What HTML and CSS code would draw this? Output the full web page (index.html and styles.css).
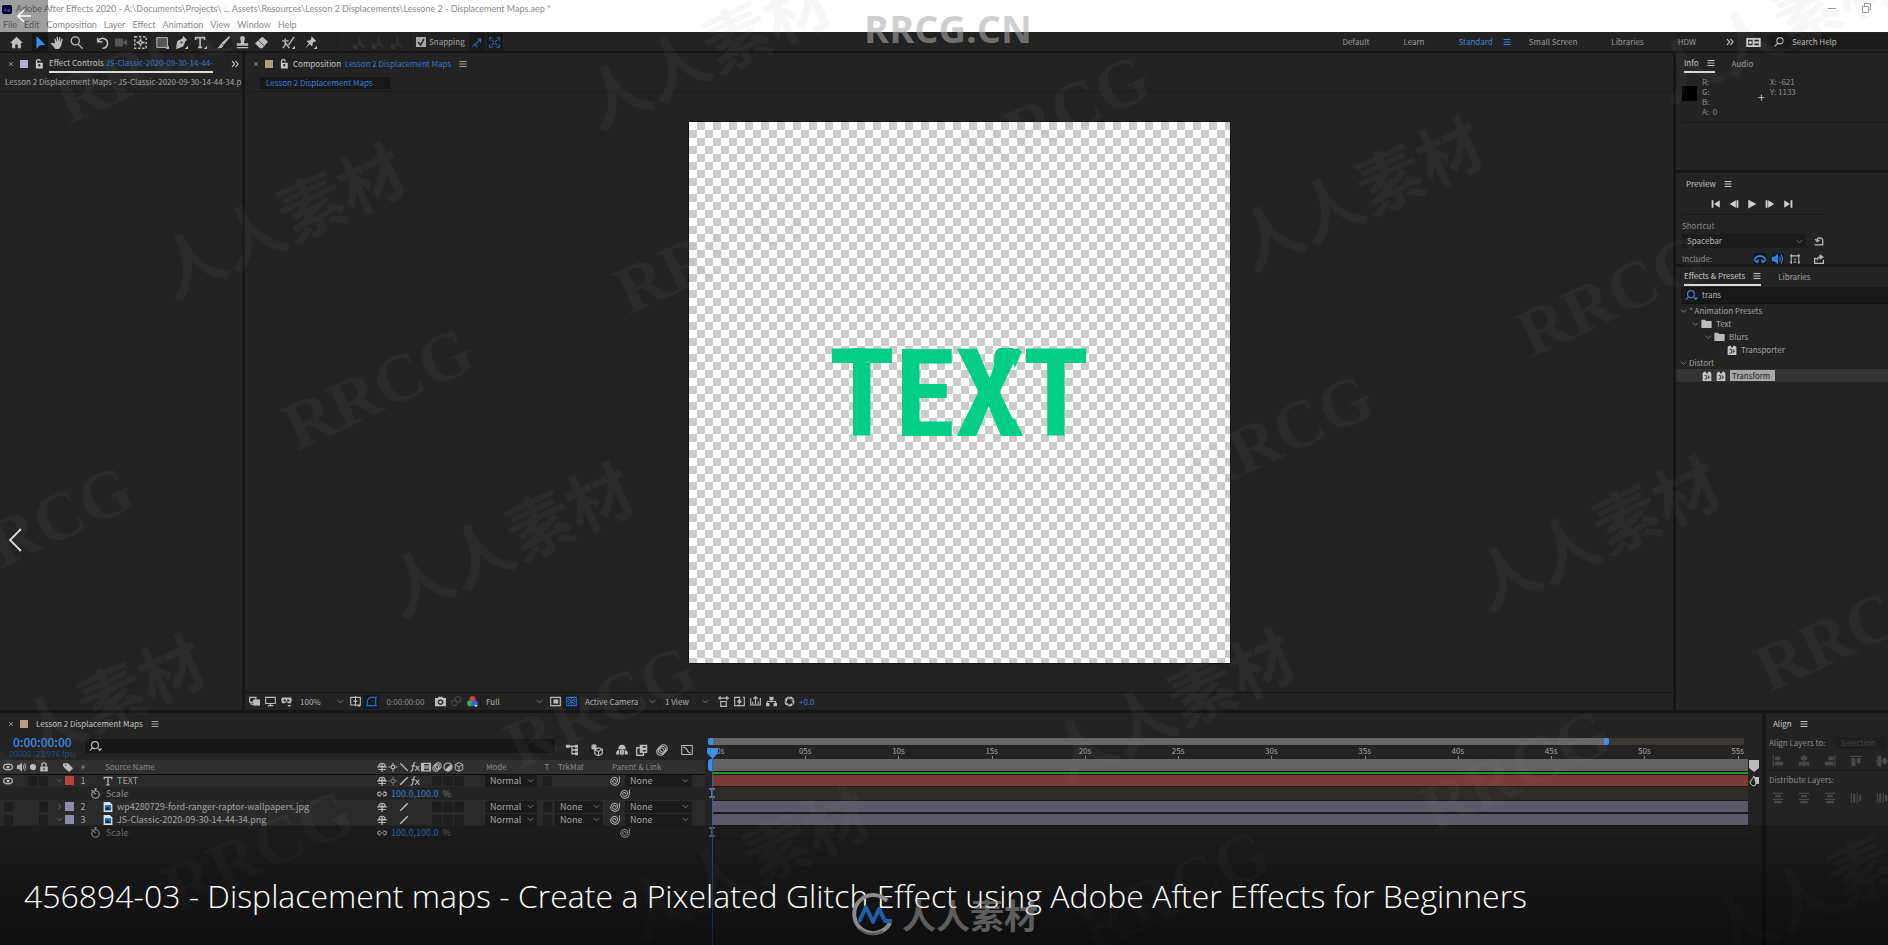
FILE: index.html
```html
<!DOCTYPE html>
<html lang="en">
<head>
<meta charset="utf-8">
<title>Adobe After Effects 2020</title>
<link rel="stylesheet" href="styles.css">
</head>
<body>
<svg class="sprite" aria-hidden="true">
  <symbol id="home" viewBox="0 0 16 16"><path fill="currentColor" d="M8 1 0 8.500h2.500V15h4v-4.500h3V15h4V8.500H16z"/></symbol>
  <symbol id="arrow" viewBox="0 0 16 16"><path fill="currentColor" d="M3 0v16l4-4.500 7-.5z"/></symbol>
  <symbol id="hand" viewBox="0 0 16 16"><path fill="currentColor" d="M5 9 4 3.500q1-1 1.600.2L7 7.500V1.200q1-1 1.600 0L9 7l1.200-5.500q1-.8 1.500.3L11 8l2-4.500q1.200-.5 1.400.6L12.500 12 10 16H5.500L0 9.500q0-1.500 1.700-1z"/></symbol>
  <symbol id="zoom" viewBox="0 0 16 16"><g fill="none" stroke="currentColor" stroke-width="1.600"><circle cx="6.500" cy="6" r="5"/><path d="m10 10 5.500 5.500"/></g></symbol>
  <symbol id="rotate" viewBox="0 0 16 16"><path fill="none" stroke="currentColor" stroke-width="1.800" d="M2 8V2m0 5h6M3 6a6 6 0 1 1 5 9"/></symbol>
  <symbol id="vidcam" viewBox="0 0 16 16"><path fill="currentColor" d="M0 3h10v4l5-3v8l-5-3v4H0z"/></symbol>
  <symbol id="anchor" viewBox="0 0 16 16"><g fill="none" stroke="currentColor" stroke-width="1.800"><path stroke-dasharray="3 2" d="M1 1h14v14H1z"/><circle cx="8" cy="8" r="2"/><path d="M8 3v3m0 4v3M3 8h3m4 0h3"/></g></symbol>
  <symbol id="rect" viewBox="0 0 16 16"><path fill="#555" stroke="currentColor" stroke-width="1.200" d="M1 2h13v12H1z"/><path fill="currentColor" d="M16 12v4h-4z"/></symbol>
  <symbol id="pen" viewBox="0 0 16 16"><path fill="currentColor" d="m10 0 5 5-2 1-3 7-8 3-1-1 5-6-5 5 2-8 6-3z"/><circle cx="8" cy="8" r="1.300" fill="#232323"/><path fill="currentColor" d="M16 12v4h-4z"/></symbol>
  <symbol id="type" viewBox="0 0 16 16"><path fill="none" stroke="currentColor" stroke-width="2" d="M2 5V2h11v3M7.500 2v12M5 14h5"/><path fill="currentColor" d="M16 12v4h-4z"/></symbol>
  <symbol id="brush" viewBox="0 0 16 16"><path fill="currentColor" d="M15 0q2 1 0 3L8 11 5.500 8.500zM5 9l3 3q-2 4-8 3 3-1 5-6z"/></symbol>
  <symbol id="stamp" viewBox="0 0 16 16"><path fill="currentColor" d="M6 7 5 3q0-3 3-3t3 3l-1 4v2h5v3H1V9h5zM1 13.500h14V15H1z"/></symbol>
  <symbol id="eraser" viewBox="0 0 16 16"><path fill="currentColor" d="m9 1 7 6-7 8H6L0 9z"/><path stroke="#232323" d="m4 5 7 7"/></symbol>
  <symbol id="roto" viewBox="0 0 16 16"><path fill="none" stroke="currentColor" stroke-width="1.700" d="M4 3v2M0 6h8M4 6v5l-3 4M5 9l4 6M15 1 8 11"/><path fill="currentColor" d="M16 12v4h-4z"/></symbol>
  <symbol id="pin" viewBox="0 0 16 16"><path fill="currentColor" d="m9 0 6 6-2 1-2 1-1 5-3-3-6 6 5-7-3-3 5-1 1-2z"/><path fill="currentColor" d="M16 12v4h-4z"/></symbol>
  <symbol id="snapa" viewBox="0 0 16 16"><path fill="none" stroke="currentColor" stroke-width="1.500" d="M9 3h5v5M14 3 8 9l-6 5M5 10l3 2 1 3"/></symbol>
  <symbol id="snapb" viewBox="0 0 16 16"><path fill="none" stroke="currentColor" stroke-width="1.500" d="M1 5V1h4m6 0h4v4m0 6v4h-4m-6 0H1v-4M4 4l3 3m5-3L9 7m-5 5 3-3m5 3L9 9"/></symbol>
  <symbol id="axis" viewBox="0 0 16 16"><path fill="none" stroke="currentColor" stroke-width="2" d="M8 1v8l-6 5M8 9l6 5M1 9v6h5"/></symbol>
  <symbol id="lock-open" viewBox="0 0 16 16"><path fill="currentColor" fill-rule="evenodd" d="M3 6h11v9H3zm4 2v4h3V8z"/><path fill="none" stroke="currentColor" stroke-width="1.800" d="M4 7V4q0-3 3-3t3 3"/></symbol>
  <symbol id="lock" viewBox="0 0 16 16"><path fill="currentColor" fill-rule="evenodd" d="M2 7h12v8H2zm5 2v4h2V9z"/><path fill="none" stroke="currentColor" stroke-width="2" d="M4.500 7V5q0-3.500 3.500-3.500T11.500 5v2"/></symbol>
  <symbol id="menu" viewBox="0 0 16 16"><path stroke="currentColor" stroke-width="2" d="M1 3h14M1 8h14M1 13h14"/></symbol>
  <symbol id="more" viewBox="0 0 16 16"><path fill="none" stroke="currentColor" stroke-width="2.200" d="m2 2 5 6-5 6M9 2l5 6-5 6"/></symbol>
  <symbol id="close" viewBox="0 0 16 16"><path stroke="currentColor" stroke-width="2" d="m4 4 8 8m0-8-8 8"/></symbol>
  <symbol id="chev" viewBox="0 0 16 16"><path fill="none" stroke="currentColor" stroke-width="2" d="m2 5 6 6 6-6"/></symbol>
  <symbol id="chevr" viewBox="0 0 16 16"><path fill="none" stroke="currentColor" stroke-width="2" d="m5 2 6 6-6 6"/></symbol>
  <symbol id="mag" viewBox="0 0 16 16"><g fill="none" stroke="currentColor" stroke-width="1.700"><circle cx="9.500" cy="6" r="5"/><path d="m6 10-5 5"/></g></symbol>
  <symbol id="magd" viewBox="0 0 20 16"><g fill="none" stroke="currentColor" stroke-width="1.700"><circle cx="8.500" cy="6" r="5"/><path d="m5 10-4 4"/></g><path fill="currentColor" d="M12 11h7l-3.500 4z"/></symbol>
  <symbol id="wsreset" viewBox="0 0 16 10"><path fill="currentColor" fill-rule="evenodd" d="M0 0h16v10H0zm2 2v6h5V2zm7 0v2h5V2zm0 4v2h5V6z"/><circle cx="4.500" cy="5" r="1.800" fill="currentColor"/></symbol>
  <symbol id="first" viewBox="0 0 16 16"><path fill="currentColor" d="M1 2h3v12H1zm13 0v12L5 8z"/></symbol>
  <symbol id="prev" viewBox="0 0 16 16"><path fill="currentColor" d="M15 2h-3v12h3zm-4 0v12L1 8z"/></symbol>
  <symbol id="play" viewBox="0 0 16 16"><path fill="currentColor" d="m2 1 13 7-13 7z"/></symbol>
  <symbol id="next" viewBox="0 0 16 16"><path fill="currentColor" d="M1 2h3v12H1zm4 0v12l10-6z"/></symbol>
  <symbol id="last" viewBox="0 0 16 16"><path fill="currentColor" d="M15 2h-3v12h3zM2 2v12l9-6z"/></symbol>
  <symbol id="undo" viewBox="0 0 16 16"><path fill="none" stroke="currentColor" stroke-width="2" d="M1 14h13V8q0-5-5-5T5 8M2 5l3 4 4-3"/></symbol>
  <symbol id="loopeye" viewBox="0 0 16 16"><path fill="none" stroke="currentColor" stroke-width="2" d="M5 12Q1 11 1 8q2-4 7-4t7 4q0 3-4 4M5 9v3H2m9-3v3h3"/></symbol>
  <symbol id="speaker" viewBox="0 0 16 16"><path fill="currentColor" d="M0 5h3l5-4v14l-5-4H0z"/><path fill="none" stroke="currentColor" stroke-width="1.500" d="M10 5q2 3 0 6m2-9q4 6 0 12"/></symbol>
  <symbol id="bounds" viewBox="0 0 16 16"><path fill="none" stroke="currentColor" stroke-width="1.700" d="M2 0v16M14 0v16M0 3h16M0 13h3m3 0h4m3 0h3M8 7v3"/></symbol>
  <symbol id="export" viewBox="0 0 16 16"><path fill="none" stroke="currentColor" stroke-width="2" d="M4 7H1v8h14V9M5 10q0-5 5-5"/><path fill="currentColor" d="M9 0v9l7-4z"/></symbol>
  <symbol id="folder" viewBox="0 0 16 14"><path fill="currentColor" d="M0 1h6l1 2h9v11H0z"/></symbol>
  <symbol id="preset" viewBox="0 0 16 16"><path fill="currentColor" d="M1 4 3 1h3l1 3h2l1-3h3l2 3v12H1z"/><path fill="none" stroke="#333" stroke-width="1.500" d="M4 7h3v6H4m6-6v6m0-3h3"/></symbol>
  <symbol id="eye" viewBox="0 0 16 16"><ellipse cx="8" cy="8" rx="7" ry="4.500" fill="none" stroke="currentColor" stroke-width="2"/><circle cx="8" cy="8" r="2.600" fill="currentColor"/></symbol>
  <symbol id="dot" viewBox="0 0 16 16"><circle cx="8" cy="8" r="5" fill="currentColor"/></symbol>
  <symbol id="tag" viewBox="0 0 16 16"><path fill="currentColor" fill-rule="evenodd" d="M0 2h8l8 8-6 6-8-7-2-3zm3 2v2h2V4z"/></symbol>
  <symbol id="shy" viewBox="0 0 16 16"><path fill="none" stroke="currentColor" stroke-width="1.800" d="M3 7q0-5 5-5t5 5zM0 8h16M2 12h12M8 3v13"/></symbol>
  <symbol id="sun" viewBox="0 0 16 16"><g fill="none" stroke="currentColor" stroke-width="1.700"><circle cx="8" cy="8" r="3"/><path d="M8 1v3m0 8v3M1 8h3m8 0h3"/></g></symbol>
  <symbol id="bslash" viewBox="0 0 16 16"><path stroke="currentColor" stroke-width="2" d="m2 2 12 12"/></symbol>
  <symbol id="slash" viewBox="0 0 16 16"><path stroke="currentColor" stroke-width="2.200" d="M2 14 14 2"/></symbol>
  <symbol id="fx" viewBox="0 0 16 16"><path fill="none" stroke="currentColor" stroke-width="1.800" d="M1 15q3 0 3.500-5l1-6q.5-3 3-3M2 6h6m1 0 6 8m0-8-7 8"/></symbol>
  <symbol id="film" viewBox="0 0 16 16"><path fill="currentColor" fill-rule="evenodd" d="M0 1h16v14H0zm5 2v4h8V3zm0 6v4h8V9z"/><path fill="#888" d="M5 5h8v6H5z"/></symbol>
  <symbol id="blur" viewBox="0 0 16 16"><g fill="none" stroke="currentColor" stroke-width="1.600"><circle cx="10" cy="6" r="5"/><circle cx="8" cy="8" r="5"/><circle cx="6" cy="10" r="5"/></g></symbol>
  <symbol id="adj" viewBox="0 0 16 16"><circle cx="8" cy="8" r="6.500" fill="none" stroke="currentColor" stroke-width="1.800"/><path fill="currentColor" d="M12.500 3.500a6.400 6.400 0 0 1-9 9z"/></symbol>
  <symbol id="cube" viewBox="0 0 16 16"><path fill="none" stroke="currentColor" stroke-width="1.500" d="m8 1 6 3v8l-6 3-6-3V4zM2 4l6 4 6-4M8 8v7"/></symbol>
  <symbol id="spiral" viewBox="0 0 16 16"><path fill="none" stroke="currentColor" stroke-width="1.500" d="M15 1v8q-1 6-7 6-7-1-7-7 1-6 7-6 5 1 4 6-1 4-4 4-4-1-4-4 1-3 4-2.500 2 .5 1 3"/></symbol>
  <symbol id="watch" viewBox="0 0 16 16"><g fill="none" stroke="currentColor" stroke-width="1.600"><circle cx="8" cy="9.500" r="5.500"/><path d="M6 1h4M8 1v3M2 3l2 2m4 4L5 6"/></g></symbol>
  <symbol id="link" viewBox="0 0 16 16"><path fill="none" stroke="currentColor" stroke-width="1.800" d="M6 5H4a3 3 0 0 0 0 6h2m4-6h2a3 3 0 0 1 0 6h-2M5 8h6"/></symbol>
  <symbol id="file" viewBox="0 0 16 16"><path fill="#d8e4ee" d="M1 0h10l4 4v12H1z"/><path fill="#1d6fb5" d="M3 5h10v8H3z"/><path fill="#0b2c4d" d="m3 13 4-6 6 6z"/></symbol>
  <symbol id="tlayer" viewBox="0 0 16 16"><path fill="none" stroke="currentColor" stroke-width="2" d="M2 5V2h12v3M8 2v12M5.500 14h5"/></symbol>
  <symbol id="stack" viewBox="0 0 16 16"><path fill="none" stroke="currentColor" stroke-width="1.800" d="M1 2h9v7H1zM3 10v2h3"/><path fill="currentColor" d="M6 5h10v9H6z"/></symbol>
  <symbol id="blend" viewBox="0 0 16 16"><path fill="none" stroke="currentColor" stroke-width="1.800" d="M5 5H1v10h9v-3"/><path fill="currentColor" fill-rule="evenodd" d="M5 1h10v11H5zm4 2v2h4V3zm0 5v2h4V8z"/></symbol>
  <symbol id="monitor" viewBox="0 0 16 16"><path fill="none" stroke="currentColor" stroke-width="1.600" d="M1 2h14v9H1zm7 9v3m-4 0h8"/></symbol>
  <symbol id="goggles" viewBox="0 0 16 16"><path fill="currentColor" fill-rule="evenodd" d="M1 2h14q2 8-3 9-2 0-4-3-2 3-4 3-5-1-3-9zm3 3v3h3V5zm5 0v3h3V5z"/><path fill="currentColor" d="M9 13h6l-3 3z"/></symbol>
  <symbol id="grid" viewBox="0 0 16 16"><path fill="none" stroke="currentColor" stroke-width="1.600" d="M1 2h14v11H1zM8 0v15M5 7.500h6"/><path fill="currentColor" d="M10 13h6l-3 3z"/></symbol>
  <symbol id="maskp" viewBox="0 0 16 16"><path fill="none" stroke="currentColor" stroke-width="1.600" d="M2 14V7q1-4 5-5h7v12zM0 14h4m8 0h4M12 2h4"/></symbol>
  <symbol id="camera" viewBox="0 0 16 16"><path fill="currentColor" fill-rule="evenodd" d="M0 3h4l1-2h6l1 2h4v12H0zm8 2a4 4 0 1 0 .1 0z"/><circle cx="8" cy="9" r="2" fill="currentColor"/></symbol>
  <symbol id="rings" viewBox="0 0 16 16"><g fill="none" stroke="currentColor" stroke-width="1.800"><circle cx="10" cy="5" r="4"/><circle cx="5" cy="10" r="4"/></g></symbol>
  <symbol id="rgb" viewBox="0 0 16 16"><circle cx="8" cy="4.500" r="4.500" fill="#e23b30"/><circle cx="4.500" cy="10.500" r="4.500" fill="#37ac45"/><circle cx="11" cy="10.500" r="4.500" fill="#3567e8"/><path fill="#ddd" d="M10 13h6l-3 3z"/></symbol>
  <symbol id="region" viewBox="0 0 16 16"><path fill="none" stroke="currentColor" stroke-width="1.700" d="M1 2h14v12H1z"/><path fill="currentColor" d="M5 5h7v6H5z"/></symbol>
  <symbol id="transp" viewBox="0 0 16 16"><path fill="none" stroke="currentColor" stroke-width="1.500" d="M1 2h14v12H1zM3 4l10 8m0-8L3 12M8 2v3m0 6v3M1 8h3m8 0h3"/></symbol>
  <symbol id="pixel" viewBox="0 0 16 16"><path fill="none" stroke="currentColor" stroke-width="1.700" d="M0 3h16M3 0v6m10-6v6M4 8h8v7H4z"/></symbol>
  <symbol id="fast" viewBox="0 0 16 16"><path fill="none" stroke="currentColor" stroke-width="1.600" d="M9 2H1v12h14V2h-2"/><path fill="currentColor" d="m9 2-5 7h3l-1 5 6-7H9z"/></symbol>
  <symbol id="tline" viewBox="0 0 16 16"><path fill="none" stroke="currentColor" stroke-width="1.600" d="M1 3v10h14V3M4 8v4m4-10v10m4-4v4M5 4l3-3 3 3"/></symbol>
  <symbol id="flow" viewBox="0 0 16 16"><path fill="currentColor" d="M5 1h6v5H5zM0 10h5v5H0zm11 0h5v5h-5z"/><path fill="none" stroke="currentColor" stroke-width="1.500" d="M8 6v3M2 11V8h12v3"/></symbol>
  <symbol id="aperture" viewBox="0 0 16 16"><circle cx="8" cy="8" r="5.500" fill="none" stroke="currentColor" stroke-width="3.500"/><path stroke="#232323" d="m8 0-3 6M16 7l-7-3M13 15l-1-7M3 15l6-3M0 5l4 5"/></symbol>
  <symbol id="mini" viewBox="0 0 16 16"><path fill="none" stroke="currentColor" stroke-width="1.700" d="M0 3h14M8 3v5h5M8 8v5h5"/><path fill="currentColor" d="M0 1h5v4H0zm12 0h4v4h-4zm0 5h4v4h-4zm0 5h4v4h-4z"/></symbol>
  <symbol id="draft" viewBox="0 0 16 16"><path fill="none" stroke="currentColor" stroke-width="1.500" d="M4 0v8M0 4h8M1 1l6 6m0-6L1 7"/><path fill="none" stroke="currentColor" stroke-width="1.500" d="m10 5 5 2v6l-5 3-5-3V8zm0 5v6m0-6 5-3m-5 3L5 8"/></symbol>
  <symbol id="shyall" viewBox="0 0 16 16"><path fill="currentColor" d="M3 7q0-6 5-6t5 6zM0 14q0-6 4-6v6zm5-6h2v6H5zm4 0h2v6H9zm3 0q4 0 4 6h-4zM7.300 5h1.400v10H7.300z"/></symbol>
  <symbol id="graph" viewBox="0 0 16 16"><path fill="none" stroke="currentColor" stroke-width="1.400" d="M1 2h14v12H1zM3 4q3 0 5 4t5 4"/></symbol>
  <symbol id="al" viewBox="0 0 16 16"><path fill="currentColor" d="M1 0h1.500v16H1zM4 2h7v5H4zM4 9h11v5H4z"/></symbol>
  <symbol id="ac" viewBox="0 0 16 16"><path fill="currentColor" d="M7 0h2v16H7zM4 2h8v5H4zM1 9h14v5H1z"/></symbol>
  <symbol id="ar" viewBox="0 0 16 16"><path fill="currentColor" d="M14 0h1.500v16H14zM6 2h7v5H6zM1 9h12v5H1z"/></symbol>
  <symbol id="at" viewBox="0 0 16 16"><path fill="currentColor" d="M0 1h16v1.500H0zM2 4h5v11H2zM9 4h5v7H9z"/></symbol>
  <symbol id="am" viewBox="0 0 16 16"><path fill="currentColor" d="M0 7h16v2H0zM2 1h5v14H2zM9 4h5v8H9z"/></symbol>
  <symbol id="dv" viewBox="0 0 16 16"><path fill="currentColor" d="M1 1h14v1.500H1zM4 4h8v3H4zM1 9h14v1.500H1zM3 12h10v3H3z"/></symbol>
  <symbol id="dh" viewBox="0 0 16 16"><path fill="currentColor" d="M1 1h1.500v14H1zM4 2h3v12H4zM9 1h1.500v14H9zM12 4h3v8h-3z"/></symbol>
</svg>

<header class="titlebar">
  <div class="doc-title"><span class="ae">Ae</span><span>Adobe After Effects 2020 - A:\Documents\Projects\ ... Assets\Resources\Lesson 2 Displacements\Lessone 2 - Displacement Maps.aep *</span></div>
  <nav class="menus"><button>File</button><button>Edit</button><button>Composition</button><button>Layer</button><button>Effect</button><button>Animation</button><button>View</button><button>Window</button><button>Help</button></nav>
  <div class="winbtns">
    <button aria-label="Minimize"><svg viewBox="0 0 10 10"><path stroke="#999" d="M1 5.500h8"/></svg></button>
    <button aria-label="Restore"><svg viewBox="0 0 10 10"><path fill="none" stroke="#999" d="M1.500 3.500h6v6h-6zM3.500 3V.500h6v6H8"/></svg></button>
  </div>
  <button class="back" aria-label="Back"><svg viewBox="0 0 14 14"><path fill="none" stroke="#fff" stroke-width="1.600" d="M14 7H1m6-6L1 7l6 6"/></svg></button>
</header>

<div class="toolbar">
  <button class="tool home" aria-label="Home"><svg><use href="#home"/></svg></button>
  <button class="tool active" aria-label="Selection"><svg><use href="#arrow"/></svg></button>
  <div class="tools"><button class="tool" aria-label="Hand"><svg><use href="#hand"/></svg></button><button class="tool" aria-label="Zoom"><svg><use href="#zoom"/></svg></button></div>
  <div class="tools wide"><button class="tool" aria-label="Rotate"><svg><use href="#rotate"/></svg></button><button class="tool dim" aria-label="Camera"><svg><use href="#vidcam"/></svg></button><button class="tool" aria-label="Pan behind"><svg><use href="#anchor"/></svg></button></div>
  <div class="tools"><button class="tool" aria-label="Rectangle"><svg><use href="#rect"/></svg></button><button class="tool" aria-label="Pen"><svg><use href="#pen"/></svg></button><button class="tool" aria-label="Type"><svg><use href="#type"/></svg></button></div>
  <div class="tools"><button class="tool" aria-label="Brush"><svg><use href="#brush"/></svg></button><button class="tool" aria-label="Clone stamp"><svg><use href="#stamp"/></svg></button><button class="tool" aria-label="Eraser"><svg><use href="#eraser"/></svg></button></div>
  <div class="tools roomy"><button class="tool" aria-label="Roto brush"><svg><use href="#roto"/></svg></button><button class="tool" aria-label="Puppet pin"><svg><use href="#pin"/></svg></button></div>
  <div class="tools axes"><button class="tool" aria-label="Local axis"><svg><use href="#axis"/></svg></button><button class="tool" aria-label="World axis"><svg><use href="#axis"/></svg></button><button class="tool" aria-label="View axis"><svg><use href="#axis"/></svg></button></div>
  <label class="snap"><input type="checkbox" checked>Snapping</label>
  <button class="tool blue" aria-label="Snap edges"><svg><use href="#snapa"/></svg></button>
  <button class="tool blue" aria-label="Snap features"><svg><use href="#snapb"/></svg></button>
  <nav class="spaces">
    <button>Default</button><button>Learn</button><button class="on">Standard <svg class="i8"><use href="#menu"/></svg></button><button>Small Screen</button><button>Libraries</button><button>HDW</button>
  </nav>
  <button class="tool bright" aria-label="More workspaces"><svg class="i8"><use href="#more"/></svg></button>
  <button class="ws" aria-label="Reset workspace"><svg><use href="#wsreset"/></svg></button>
  <label class="help"><svg class="i10"><use href="#mag"/></svg><input type="text" value="Search Help" aria-label="Search Help"></label>
</div>

<main class="upper">
  <section class="panel fxc">
    <div class="tabs">
      <svg class="i8 x"><use href="#close"/></svg><span class="sw lav"></span><svg class="i10 lk"><use href="#lock-open"/></svg>
      <span class="tabname">Effect Controls <a href="#fx">JS-Classic-2020-09-30-14-44-</a></span>
      <svg class="i8 bright"><use href="#more"/></svg>
    </div>
    <p class="crumb">Lesson 2 Displacement Maps - JS-Classic-2020-09-30-14-44-34.p</p>
  </section>

  <section class="panel comp">
    <div class="tabs">
      <svg class="i8 x"><use href="#close"/></svg><span class="sw tan"></span><svg class="i10 lk"><use href="#lock-open"/></svg>
      <span class="tabname">Composition &nbsp;<a href="#comp">Lesson 2 Displacement Maps</a></span>
      <svg class="i8"><use href="#menu"/></svg>
    </div>
    <div class="subtabs"><button>Lesson 2 Displacement Maps</button></div>
    <div class="viewer"><div class="artboard"><span class="art">TEXT</span><svg class="warp" viewBox="0 0 541 541"><g fill="#02ce86"><path d="M160 229l4-3h12l3 3zM165 242h5v14h-5zM214 227h12v3h4v25h-16zM306 230l4-4h14l2 3h7l-7 17-2-5-16 19-5-4zM322 299l4-2 8 17h-8l-2-2h-12z"/></g></svg></div></div>
    <div class="viewbar">
      <button class="vi"><svg><use href="#stack"/></svg></button><button class="vi"><svg><use href="#monitor"/></svg></button><button class="vi"><svg><use href="#goggles"/></svg></button>
      <select class="zoomsel" aria-label="Magnification"><option>100%</option></select>
      <button class="vi"><svg><use href="#grid"/></svg></button><button class="vi sel"><svg><use href="#maskp"/></svg></button>
      <button class="tc">0:00:00:00</button>
      <button class="vi"><svg><use href="#camera"/></svg></button><button class="vi faint"><svg><use href="#rings"/></svg></button><button class="vi"><svg><use href="#rgb"/></svg></button>
      <select class="ressel" aria-label="Resolution"><option>Full</option></select>
      <button class="vi"><svg><use href="#region"/></svg></button><button class="vi sel"><svg><use href="#transp"/></svg></button>
      <select class="camsel" aria-label="3D view"><option>Active Camera</option></select>
      <select class="viewsel" aria-label="View layout"><option>1 View</option></select>
      <button class="vi"><svg><use href="#pixel"/></svg></button><button class="vi"><svg><use href="#fast"/></svg></button><button class="vi"><svg><use href="#tline"/></svg></button><button class="vi"><svg><use href="#flow"/></svg></button><button class="vi last"><svg><use href="#aperture"/></svg></button>
      <span class="expo">+0.0</span>
    </div>
  </section>

  <aside class="side">
    <section class="panel info">
      <div class="tabs"><span class="on">Info <svg class="i8"><use href="#menu"/></svg></span><span>Audio</span></div>
      <div class="readout">
        <span class="black"></span>
        <div class="chan"><span>R:</span><span>G:</span><span>B:</span><span>A: &nbsp;0</span></div>
        <span class="plus">+</span>
        <div class="chan"><span>X: -621</span><span>Y: 1133</span></div>
      </div>
    </section>
    <section class="panel preview">
      <div class="tabs"><span class="lit">Preview <svg class="i8"><use href="#menu"/></svg></span></div>
      <div class="transport"><button aria-label="First"><svg><use href="#first"/></svg></button><button aria-label="Previous"><svg><use href="#prev"/></svg></button><button aria-label="Play"><svg><use href="#play"/></svg></button><button aria-label="Next"><svg><use href="#next"/></svg></button><button aria-label="Last"><svg><use href="#last"/></svg></button></div>
      <label class="cap" for="shortcut">Shortcut</label>
      <div class="prow"><select id="shortcut"><option>Spacebar</option></select><svg class="i10"><use href="#undo"/></svg></div>
      <div class="prow inc"><span>Include:</span><svg class="i12 blu"><use href="#loopeye"/></svg><svg class="i12 blu"><use href="#speaker"/></svg><svg class="i10"><use href="#bounds"/></svg><svg class="i10"><use href="#export"/></svg></div>
    </section>
    <section class="panel effects">
      <div class="tabs"><span class="on">Effects &amp; Presets <svg class="i8"><use href="#menu"/></svg></span><span>Libraries</span></div>
      <label class="fxsearch"><svg class="dd"><use href="#magd"/></svg><input type="text" value="trans" aria-label="Search effects"></label>
      <ul class="tree">
        <li><svg class="i8"><use href="#chev"/></svg>* Animation Presets</li>
        <li class="d1"><svg class="i8"><use href="#chev"/></svg><svg class="fold"><use href="#folder"/></svg>Text</li>
        <li class="d2"><svg class="i8"><use href="#chev"/></svg><svg class="fold"><use href="#folder"/></svg>Blurs</li>
        <li class="d3"><svg class="i10"><use href="#preset"/></svg>Transporter</li>
        <li><svg class="i8"><use href="#chev"/></svg>Distort</li>
        <li class="d4 picked"><svg class="i10"><use href="#preset"/></svg><svg class="i10"><use href="#preset"/></svg><span>Transform</span></li>
      </ul>
    </section>
  </aside>
</main>

<section class="lower">
  <div class="panel layers">
    <div class="tabs"><svg class="i8 x"><use href="#close"/></svg><span class="sw tan"></span><span class="tabname tl">Lesson 2 Displacement Maps</span><svg class="i8"><use href="#menu"/></svg></div>
    <div class="timehead">
      <div class="clock"><strong>0:00:00:00</strong><small>00000 (23.976 fps)</small></div>
      <label class="lsearch"><svg class="dd"><use href="#magd"/></svg><input type="text" aria-label="Search layers"></label>
      <div class="tlbtns"><button><svg><use href="#mini"/></svg></button><button><svg><use href="#draft"/></svg></button><button><svg><use href="#shyall"/></svg></button><button><svg><use href="#blend"/></svg></button><button><svg><use href="#blur"/></svg></button><button><svg><use href="#graph"/></svg></button></div>
    </div>
    <table>
      <colgroup><col class="w16"><col class="w11"><col class="w11"><col class="w11"><col class="w27"><col class="w14"><col><col class="w106"><col class="w58"><col class="w14"><col class="w54"><col class="w97"></colgroup>
      <thead><tr><th><svg><use href="#eye"/></svg></th><th><svg><use href="#speaker"/></svg></th><th><svg><use href="#dot"/></svg></th><th><svg><use href="#lock"/></svg></th><th class="r"><svg class="i10"><use href="#tag"/></svg></th><th>#</th><th class="src">Source Name</th>
        <th><div class="switches"><svg><use href="#shy"/></svg><svg><use href="#sun"/></svg><svg><use href="#bslash"/></svg><svg><use href="#fx"/></svg><svg><use href="#film"/></svg><svg><use href="#blur"/></svg><svg><use href="#adj"/></svg><svg><use href="#cube"/></svg></div></th>
        <th class="l">Mode</th><th>T</th><th class="l">TrkMat</th><th class="l">Parent &amp; Link</th></tr></thead>
      <tbody>
        <tr class="layer"><td><svg><use href="#eye"/></svg></td><td></td><td><i class="box"></i></td><td><i class="box"></i></td><td><div class="lab"><svg><use href="#chev"/></svg><i class="sw red"></i></div></td><td>1</td><td class="nm"><div><svg class="i10"><use href="#tlayer"/></svg>TEXT</div></td>
          <td><div class="switches"><svg><use href="#shy"/></svg><svg class="dim"><use href="#sun"/></svg><svg><use href="#slash"/></svg><svg><use href="#fx"/></svg><i></i><i class="box"></i><i class="box"></i><i class="box"></i></div></td>
          <td><select class="mode" aria-label="Mode"><option>Normal</option></select></td><td><i class="box"></i></td><td></td><td><div class="par"><svg class="i10"><use href="#spiral"/></svg><select aria-label="Parent"><option>None</option></select></div></td></tr>
        <tr><td></td><td></td><td></td><td></td><td></td><td></td><td class="prop"><div><svg class="i12"><use href="#watch"/></svg>Scale</div></td><td><div class="vals"><svg><use href="#link"/></svg><a href="#scale">100.0,100.0</a>%</div></td><td></td><td></td><td></td><td><div class="par sub"><svg class="i10"><use href="#spiral"/></svg></div></td></tr>
        <tr class="layer"><td><i class="box"></i></td><td></td><td></td><td><i class="box"></i></td><td><div class="lab"><svg><use href="#chevr"/></svg><i class="sw lav2"></i></div></td><td>2</td><td class="nm"><div><svg class="i10"><use href="#file"/></svg>wp4280729-ford-ranger-raptor-wallpapers.jpg</div></td>
          <td><div class="switches"><svg><use href="#shy"/></svg><i></i><svg><use href="#slash"/></svg><i></i><i></i><i class="box"></i><i class="box"></i><i class="box"></i></div></td>
          <td><select class="mode" aria-label="Mode"><option>Normal</option></select></td><td><i class="box"></i></td><td><select class="trk" aria-label="Track matte"><option>None</option></select></td><td><div class="par"><svg class="i10"><use href="#spiral"/></svg><select aria-label="Parent"><option>None</option></select></div></td></tr>
        <tr class="layer"><td><i class="box"></i></td><td></td><td></td><td><i class="box"></i></td><td><div class="lab"><svg><use href="#chev"/></svg><i class="sw lav2"></i></div></td><td>3</td><td class="nm"><div><svg class="i10"><use href="#file"/></svg>JS-Classic-2020-09-30-14-44-34.png</div></td>
          <td><div class="switches"><svg><use href="#shy"/></svg><i></i><svg><use href="#slash"/></svg><i></i><i></i><i class="box"></i><i class="box"></i><i class="box"></i></div></td>
          <td><select class="mode" aria-label="Mode"><option>Normal</option></select></td><td><i class="box"></i></td><td><select class="trk" aria-label="Track matte"><option>None</option></select></td><td><div class="par"><svg class="i10"><use href="#spiral"/></svg><select aria-label="Parent"><option>None</option></select></div></td></tr>
        <tr><td></td><td></td><td></td><td></td><td></td><td></td><td class="prop"><div><svg class="i12"><use href="#watch"/></svg>Scale</div></td><td><div class="vals"><svg><use href="#link"/></svg><a href="#scale">100.0,100.0</a>%</div></td><td></td><td></td><td></td><td><div class="par sub"><svg class="i10"><use href="#spiral"/></svg></div></td></tr>
      </tbody>
    </table>
  </div>

  <div class="panel track">
    <div class="navi"><span class="thumb"></span></div>
    <div class="ruler"><span><b>:00s</b></span><span><b>05s</b></span><span><b>10s</b></span><span><b>15s</b></span><span><b>20s</b></span><span><b>25s</b></span><span><b>30s</b></span><span><b>35s</b></span><span><b>40s</b></span><span><b>45s</b></span><span><b>50s</b></span><span><b>55s</b></span></div>
    <div class="work"></div>
    <div class="cached"></div>
    <div class="clip redclip"></div>
    <div class="keys"><svg viewBox="0 0 6 10"><path fill="none" stroke="#889" stroke-width="1.500" d="M0 1h6M0 9h6M3 1v8"/></svg></div>
    <div class="clip"></div>
    <div class="clip"></div>
    <div class="keys plain"><svg viewBox="0 0 6 10"><path fill="none" stroke="#889" stroke-width="1.500" d="M0 1h6M0 9h6M3 1v8"/></svg></div>
    <div class="rest"></div>
    <div class="playhead"><svg viewBox="0 0 11 11"><path fill="#3b8eea" d="M0 0h11v5l-5.500 6L0 5z"/></svg></div>
    <div class="marks"><svg viewBox="0 0 10 12"><path fill="#bbb" d="M0 0h10v8l-5 4-5-4z"/></svg><svg viewBox="0 0 10 12"><path fill="#bbb" d="M5 2h5v7H5z"/><path fill="#232323" stroke="#bbb" d="m5 1 2 7q0 3-3 3L1 8z"/><path stroke="#3a9c4a" d="m0 8 4-6"/></svg></div>
  </div>

  <aside class="panel align">
    <div class="tabs"><span class="lit">Align <svg class="i8"><use href="#menu"/></svg></span></div>
    <div class="arow"><label for="alignto">Align Layers to:</label><select id="alignto" disabled><option>Selection</option></select></div>
    <div class="aicons ruled"><svg><use href="#al"/></svg><svg><use href="#ac"/></svg><svg><use href="#ar"/></svg><svg><use href="#at"/></svg><svg><use href="#am"/></svg></div>
    <div class="arow">Distribute Layers:</div>
    <div class="aicons"><svg><use href="#dv"/></svg><svg><use href="#dv"/></svg><svg><use href="#dv"/></svg><svg><use href="#dh"/></svg><svg><use href="#dh"/></svg></div>
  </aside>
</section>

<div class="marksheet" aria-hidden="true">
  <span class="cn" style="left:280px;top:217px">人人素材</span><span class="cn" style="left:508px;top:536px">人人素材</span><span class="cn" style="left:80px;top:708px">人人素材</span><span class="cn" style="left:705px;top:48px">人人素材</span><span class="cn" style="left:1358px;top:190px">人人素材</span><span class="cn" style="left:1595px;top:530px">人人素材</span><span class="cn" style="left:1170px;top:702px">人人素材</span><span class="cn" style="left:745px;top:860px">人人素材</span><span class="cn" style="left:1775px;top:22px">人人素材</span><span class="cn" style="left:1830px;top:880px">人人素材</span>
  <span style="left:378px;top:388px">RRCG</span><span style="left:38px;top:526px">RRCG</span><span style="left:710px;top:252px">RRCG</span><span style="left:600px;top:706px">RRCG</span><span style="left:258px;top:850px">RRCG</span><span style="left:1055px;top:115px">RRCG</span><span style="left:1278px;top:434px">RRCG</span><span style="left:1612px;top:295px">RRCG</span><span style="left:1515px;top:770px">RRCG</span><span style="left:1174px;top:890px">RRCG</span><span style="left:1850px;top:630px">RRCG</span><span style="left:150px;top:62px">RRCG</span>
</div>
<div class="brand-top">RRCG.CN</div>
<button class="pagenav" aria-label="Previous"><svg viewBox="0 0 14 24"><path fill="none" stroke="#ddd" stroke-width="1.800" d="M13 1 2 12l11 11"/></svg></button>
<div class="scrim"><h1>456894-03 - Displacement maps - Create a Pixelated Glitch Effect using Adobe After Effects for Beginners</h1></div>
<div class="brand-bottom"><svg viewBox="0 0 44 44"><path fill="none" stroke="#8a8a8a" stroke-width="4" d="M37 8A19 19 0 1 0 40 30"/><path fill="none" stroke="#555" stroke-width="2" d="M9 36q12 9 24 2"/><path fill="none" stroke="#1f5fa8" stroke-width="4" stroke-linejoin="round" d="m9 29 7-15 7 15 6-13 6 12h7"/></svg><span>人人素材</span></div>
</body>
</html>
```

FILE: styles.css
```css
* { box-sizing: border-box; }

body {
  margin: 0;
  height: 100vh;
  display: flex;
  flex-direction: column;
  position: relative;
  overflow: hidden;
  background: #161616;
  color: #a4a4a4;
  font: 8px/12px "Noto Sans CJK SC", "Open Sans", sans-serif;
}

.sprite { position: absolute; width: 0; height: 0; }
svg { display: block; flex: none; }
button, input, select { font: inherit; color: inherit; background: none; border: 0; padding: 0; margin: 0; }
a { color: #3a78c8; text-decoration: none; }
p, h1, ul { margin: 0; padding: 0; }
i { font-style: normal; }

select {
  appearance: none;
  height: 12px;
  padding: 0 12px 0 5px;
  background: #1b1b1b url("data:image/svg+xml,%3Csvg xmlns='http://www.w3.org/2000/svg' viewBox='0 0 8 8'%3E%3Cpath d='m1 2.500 3 3 3-3' fill='none' stroke='%23888'/%3E%3C/svg%3E") no-repeat right 3px center / 7px 7px;
}

.i8 { width: 8px; height: 8px; }
.i10 { width: 10px; height: 10px; }
.i12 { width: 12px; height: 12px; }
.dd { width: 14px; height: 11px; }
.bright { color: #ddd; }

/* title bar */
.titlebar { position: relative; height: 32px; flex: none; background: #fff; color: #8a8a8a; font: 9px/12px Lato, "Open Sans", sans-serif; }
.doc-title { display: flex; align-items: center; gap: 4px; height: 18px; padding-left: 2px; white-space: nowrap; }
.ae { width: 10px; height: 9px; background: #00005b; color: #99f; border-radius: 2px; font-size: 6px; line-height: 9px; text-align: center; }
.menus { display: flex; gap: 7px; height: 14px; padding-left: 3px; }
.winbtns { position: absolute; right: 17px; top: 3px; display: flex; gap: 24px; }
.winbtns svg { width: 10px; height: 10px; }
.back { position: absolute; left: 0; top: 0; width: 48px; height: 32px; background: rgba(0, 0, 0, .38); }
.back svg { width: 14px; height: 14px; margin-left: 17px; }

/* tool bar */
.toolbar { display: flex; align-items: center; height: 21px; padding-top: 1px; flex: none; background: #232323; border-bottom: 2px solid #161616; }
.tool { width: 19px; height: 18px; display: flex; align-items: center; justify-content: center; color: #bdbdbd; }
.tool svg { width: 13px; height: 13px; }
.tool svg.i8 { width: 8px; height: 8px; }
.tool.home { width: 32px; }
.tool.active { width: 16px; color: #3b8eea; background: #161616; }
.tool.dim { color: #555; }
.tool.bright { color: #ddd; }
.tools { display: flex; padding-right: 4px; }
.tools.wide { padding-left: 3px; padding-right: 3px; }
.tools.roomy { padding: 0 16px 0 2px; border-right: 1px solid #1a1a1a; }
.roomy .tool { width: 22px; }
.tools.axes { padding: 0 3px 0 12px; border-right: 1px solid #1a1a1a; }
.axes .tool { color: #333; }
.snap { display: flex; align-items: center; gap: 3px; padding: 0 4px 0 5px; }
.snap input { appearance: none; width: 10px; height: 10px; background: #a8a8a8 url("data:image/svg+xml,%3Csvg xmlns='http://www.w3.org/2000/svg' viewBox='0 0 10 10'%3E%3Cpath d='m2 5 2.500 3L8 2' fill='none' stroke='%23222' stroke-width='1.500'/%3E%3C/svg%3E"); }
.tool.blue { color: #2f6db5; background: #1a1a1a; width: 16px; margin-right: 2px; }
.tool.blue svg { width: 11px; height: 11px; }
.spaces { display: flex; gap: 34px; margin-left: auto; color: #999; }
.spaces .on { display: flex; align-items: center; gap: 10px; color: #3b80dd; margin-right: -16px; }
.spaces + .tool { margin: 0 2px 0 24px; }
.ws { border-left: 1px solid #1a1a1a; padding: 0 8px 0 4px; color: #d0d0d0; }
.ws svg { width: 15px; height: 9px; }
.help { display: flex; align-items: center; gap: 8px; width: 119px; height: 16px; padding-left: 5px; background: #1b1b1b; color: #b8b8b8; }
.help input { width: 80px; }

/* upper workspace */
.upper { flex: 1; min-height: 0; display: grid; grid-template-columns: 242px minmax(0, 1fr) 212px; gap: 3px; }
.panel { background: #232323; min-width: 0; }
.tabs { display: flex; align-items: center; height: 21px; white-space: nowrap; }
.tabs .on, .tabs .lit { display: flex; align-items: center; gap: 8px; color: #c8c8c8; }
.tabs .on { border-bottom: 2px solid #ddd; height: 18px; }
.sw { width: 8px; height: 8px; flex: none; }
.lav { background: #b3aed2; }
.tan { background: #b79c7e; }
.red { background: #b8443c; }
.lav2 { background: #8d8bab; }
.x { margin: 0 5px 0 7px; color: #888; }
.lk { margin: 0 5px 0 6px; color: #ccc; }
.comp .lk { margin-right: 4px; }
.tabname { color: #c8c8c8; margin-right: 8px; }
.fxc .tabname { border-bottom: 2px solid #ddd; line-height: 17px; margin-right: auto; }
.fxc .tabs { padding-right: 3px; }
.crumb { padding: 2px 0 3px 5px; white-space: nowrap; overflow: hidden; border-bottom: 1px solid #1a1a1a; }

.comp { display: flex; flex-direction: column; }
.subtabs { height: 18px; padding: 3px 0 0 15px; border-bottom: 1px solid #1c1c1c; }
.subtabs button { display: block; width: 131px; height: 12px; padding-left: 6px; text-align: left; line-height: 12px; color: #3b80dd; background: #181818; }
.viewer { flex: 1; min-height: 0; display: flex; align-items: center; justify-content: center; }
.artboard {
  position: relative;
  width: 541px; aspect-ratio: 1; display: flex; align-items: center; justify-content: center;
  background: conic-gradient(#fff 25%, #cbcbcb 0 50%, #fff 0 75%, #cbcbcb 0) 8px 0 / 16px 16px;
  outline: 1px solid #111;
}
.art { padding-top: 6px; font: bold 122px/128px "Liberation Sans Narrow", "Roboto Condensed", "Open Sans Condensed", "Noto Sans Condensed", "Noto Sans CJK SC", sans-serif; color: #02ce86; }
.warp { position: absolute; inset: 0; }
.viewbar { display: flex; align-items: center; height: 18px; padding-left: 1px; border-top: 1px solid #151515; color: #b4b4b4; }
.vi { width: 16px; height: 14px; display: flex; align-items: center; justify-content: center; color: #bbb; }
.vi svg { width: 11px; height: 11px; }
.vi.sel { color: #2f6db5; background: #151a22; }
.vi.faint { color: #444; }
.viewbar select { background-color: transparent; border-left: 1px solid #1a1a1a; }
.zoomsel { width: 53px; }
.ressel { width: 66px; margin-right: 1px; }
.camsel { width: 80px; }
.viewsel { width: 53px; margin-right: 3px; }
.vi.last { margin-left: 2px; }
.tc { width: 53px; color: #8a8a8a; }
.expo { color: #3b80dd; padding-left: 2px; }

/* right column */
.side { display: flex; flex-direction: column; gap: 3px; min-height: 0; }
.info { height: 117px; }
.info .tabs, .effects .tabs { gap: 17px; padding-left: 8px; }
.readout { display: grid; grid-template-columns: 16px 52px 8px 1fr; column-gap: 4px; margin: 3px 0 0 6px; padding-bottom: 5px; border-bottom: 1px solid #181818; color: #8c8c8c; }
.black { width: 15px; height: 15px; margin-top: 9px; background: #000; }
.chan { display: flex; flex-direction: column; line-height: 10px; }
.plus { font-size: 12px; margin-top: 14px; color: #ccc; }
.preview { height: 91px; overflow: hidden; padding-left: 6px; }
.preview .tabs { padding-left: 4px; }
.transport { display: flex; gap: 8px; width: 144px; padding: 4px 0 4px 29px; height: 21px; border-bottom: 1px solid #191919; }
.transport svg { width: 10px; height: 10px; color: #d0d0d0; }
.cap { display: block; height: 19px; line-height: 22px; color: #8a8a8a; }
.prow { display: flex; align-items: center; gap: 8px; height: 14px; color: #bbb; }
.prow select { width: 124px; height: 14px; }
.inc { height: 22px; gap: 6px; }
.inc span { width: 66px; color: #8a8a8a; }
.inc svg:last-child { margin-left: 8px; }
.blu { color: #3b80dd; background: #151a22; }
.effects { flex: 1; }
.effects .tabs { height: 20px; }
.fxsearch { display: flex; align-items: center; gap: 3px; height: 17px; margin-left: 5px; padding-left: 4px; background: #181818; border-bottom: 1px solid #111; color: #3b80dd; }
.fxsearch input { width: 150px; color: #bbb; }
.tree { list-style: none; }
.tree li { display: flex; align-items: center; height: 13px; padding-left: 4px; gap: 2px; }
.tree li .i8 { color: #888; width: 7px; }
.tree .fold { width: 11px; height: 9px; margin-right: 2px; color: #bbb; }
.tree .i10 { color: #c8c8c8; margin-right: 2px; }
.tree .d1 { padding-left: 16px; }
.tree .d2 { padding-left: 29px; }
.tree .d3 { padding-left: 51px; }
.tree .d4 { padding-left: 26px; }
.picked { background: #333; }
.picked span { padding: 0 5px 0 2px; line-height: 11px; background: #a6a6a6; color: #222; }

/* timeline */
.lower { flex: none; min-height: 232px; margin-top: 3px; display: grid; grid-template-columns: 705px minmax(0, 1fr) 126px; }
.tl { margin-left: 8px; }
.timehead { display: flex; height: 26px; }
.clock { width: 85px; padding-left: 13px; }
.clock strong { display: block; font-size: 12px; line-height: 15px; font-weight: 500; color: #3b8eea; }
.clock small { display: block; font-size: 8px; line-height: 9px; margin-left: -4px; color: #24508a; }
.lsearch { display: flex; align-items: center; width: 470px; height: 14px; margin-top: 5px; padding-left: 4px; background: #171717; color: #bbb; }
.lsearch input { flex: 1; }
.tlbtns { display: flex; gap: 8px; padding: 5px 0 0 11px; color: #bbb; }
.tlbtns svg { width: 12px; height: 12px; }
.tlbtns button:nth-child(2) { margin: 0 5px; }
.tlbtns button:last-child { margin-left: 5px; }

table { width: 100%; table-layout: fixed; border-collapse: collapse; }
.w11 { width: 11px; } .w14 { width: 14px; } .w16 { width: 16px; } .w27 { width: 27px; } .w54 { width: 54px; } .w58 { width: 58px; } .w97 { width: 97px; } .w106 { width: 106px; }
th, td { height: 13px; padding: 0; text-align: center; font-weight: 400; white-space: nowrap; line-height: 12px; }
td { font-size: 9px; }
th { height: 14px; background: #303030; color: #888; border-bottom: 1px solid #0c0c0c; }
th svg, td svg { width: 10px; height: 10px; margin: 0 auto; color: #bbb; }
th.l, th.src { text-align: left; }
th.l { padding-left: 4px; }
th.src { padding-left: 15px; }
th.r svg { margin-right: 3px; }
.layer { background: #2a2a2a; }
.box { display: block; width: 9px; height: 10px; margin: 0 auto; background: #1e1e1e; }
.lab { display: flex; align-items: center; justify-content: flex-end; gap: 2px; padding-right: 2px; }
.lab svg { width: 7px; height: 7px; margin: 0; color: #777; }
.lab .sw { width: 9px; height: 9px; }
.nm div, .prop div, .vals, .par { display: flex; align-items: center; text-align: left; }
.nm div { padding-left: 13px; gap: 4px; }
.nm svg, .prop svg, .vals svg, .par svg { margin: 0; }
.prop { color: #8c8c8c; }
.prop .i12 { width: 11px; height: 11px; color: #aaa; }
.prop div { gap: 5px; }
.switches { display: flex; gap: 1px; padding-left: 1px; }
.switches svg, .switches i { width: 10px; margin: 0; flex: none; }
.switches .dim { color: #777; }
.vals { gap: 4px; padding-left: 1px; color: #777; }
.mode { display: block; width: 52px; margin-left: 3px; }
.trk { display: block; width: 48px; margin-left: 1px; }
.par { padding-left: 2px; gap: 5px; }
.par select { width: 67px; }
.par.sub { padding-left: 12px; }

.track { position: relative; display: flex; flex-direction: column; padding: 25px 14px 0 7px; }
.navi { height: 7px; margin: 0 4px 0 -4px; background: #3d3733; flex: none; }
.thumb { display: block; width: 87%; height: 7px; background: #666; border: solid #3b8eea; border-width: 0 5px; border-radius: 2px; }
.ruler { display: flex; height: 14px; flex: none; overflow: visible; }
.ruler span { flex: 0 0 9%; background: linear-gradient(#888, #888) no-repeat 0 100% / 1px 3px; }
.ruler span:first-child { background: none; }
.ruler b { display: block; width: 16px; margin-left: -8px; font-weight: 400; text-align: center; }
.ruler span:first-child b { margin-left: -3px; }
.work { height: 12px; margin-left: -4px; background: #636363; border-left: 5px solid #3b8eea; border-radius: 3px 0 0 3px; flex: none; }
.cached { height: 3px; background: #1f9a28; border-top: 1px solid #111; flex: none; }
.clip { height: 13px; flex: none; background: #5c5a68; border: solid #1a1a1a; border-width: 1px 0; }
.redclip { background: #7c3a38; }
.keys { height: 13px; flex: none; background: #2e2b29; }
.keys svg { width: 6px; height: 10px; margin: 1px 0 0 -3px; }
.plain { background: none; border-bottom: 1px solid #1b1b1b; }
.rest { flex: 1; }
.playhead { position: absolute; left: 2px; top: 35px; bottom: 0; width: 11px; background: linear-gradient(#2a62a4, #2a62a4) no-repeat 5px 0 / 1px 100%; }
.playhead svg { width: 11px; height: 11px; }
.marks { position: absolute; right: 3px; top: 47px; display: grid; gap: 3px; }
.marks svg { width: 10px; height: 12px; }

.align { border-left: 4px solid #161616; padding-left: 3px; overflow: hidden; }
.align .tabs { padding-left: 4px; }
.arow { display: flex; align-items: center; gap: 10px; height: 18px; white-space: nowrap; color: #8c8c8c; }
.arow select { width: 50px; padding-right: 0; color: #444; background-color: #1f1f1f; background-image: none; opacity: 1; }
.aicons { display: flex; gap: 14px; height: 19px; padding: 3px 0 0 3px; color: #484848; }
.aicons svg { width: 12px; height: 12px; }
.ruled { border-bottom: 1px solid #191919; }

/* overlays */
.marksheet { position: absolute; inset: 0; overflow: hidden; pointer-events: none; color: rgba(140, 140, 140, .07); }
.marksheet span { position: absolute; font: bold 68px/68px "Liberation Serif", serif; transform: translate(-50%, -50%) rotate(-25deg); white-space: nowrap; }
.marksheet .cn { font: bold 66px/68px "Noto Sans CJK SC", sans-serif; }
.brand-top { position: absolute; top: 4px; left: 0; right: 0; padding-left: 8px; text-align: center; font: bold 38px/48px "Open Sans", sans-serif; color: rgba(171, 171, 171, .56); pointer-events: none; }
.pagenav { position: absolute; left: 8px; top: 528px; }
.pagenav svg { width: 14px; height: 24px; }
.scrim { position: absolute; left: 0; right: 0; bottom: 0; height: 120px; padding: 49px 24px 0; background: linear-gradient(rgba(0, 0, 0, .2), rgba(0, 0, 0, .6)); pointer-events: none; }
h1 { font: 350 32px/44px "Open Sans", sans-serif; color: #fff; white-space: nowrap; }
.brand-bottom { position: absolute; left: 0; right: 0; bottom: 8px; display: flex; align-items: center; justify-content: center; gap: 8px; font: bold 34px/44px "Noto Sans CJK SC", sans-serif; color: rgba(170, 170, 170, .5); pointer-events: none; }
.brand-bottom svg { width: 44px; height: 44px; }
```
